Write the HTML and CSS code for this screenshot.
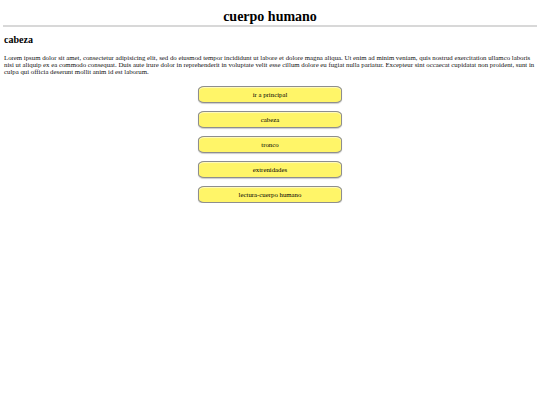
FILE: index.html
```html
<!DOCTYPE html>
<html lang="es">
<head>
<meta charset="utf-8">
<title>cuerpo humano</title>
<link rel="stylesheet" href="styles.css">
</head>
<body>
<header class="top">
  <h1 class="title">cuerpo humano</h1>
</header>
<main class="content">
  <h3 class="section">cabeza</h3>
  <p class="text">Lorem ipsum dolor sit amet, consectetur adipisicing elit, sed do eiusmod tempor incididunt ut labore et dolore magna aliqua. Ut enim ad minim veniam, quis nostrud exercitation ullamco laboris nisi ut aliquip ex ea commodo consequat. Duis aute irure dolor in reprehenderit in voluptate velit esse cillum dolore eu fugiat nulla pariatur. Excepteur sint occaecat cupidatat non proident, sunt in culpa qui officia deserunt mollit anim id est laborum.</p>
  <nav class="menu">
    <a class="btn" href="#">ir a principal</a>
    <a class="btn" href="#">cabeza</a>
    <a class="btn" href="#">tronco</a>
    <a class="btn" href="#">extrenidades</a>
    <a class="btn" href="#">lectura-cuerpo humano</a>
  </nav>
</main>
</body>
</html>
```
FILE: styles.css
```css
html, body {
  margin: 0;
  padding: 0;
  background: #fff;
}
body {
  font-family: "Liberation Serif", "Times New Roman", serif;
  color: #000;
  padding: 0 3px;
}
.top {
  border-bottom: 2px solid #d8d8d8;
  padding-top: 9px;
  padding-bottom: 1px;
}
.title {
  margin: 0;
  text-align: center;
  font-size: 14px;
  line-height: 15px;
  font-weight: bold;
}
.content {
  padding: 0 1px;
}
.section {
  margin: 7px 0 0;
  font-size: 10px;
  line-height: 12px;
  font-weight: bold;
}
.text {
  margin: 8px 0 0;
  font-size: 6.8px;
  line-height: 7px;
  color: #111;
}
.menu {
  display: flex;
  flex-direction: column;
  align-items: center;
  gap: 8px;
  margin-top: 11px;
}
.btn {
  display: block;
  width: 142px;
  height: 15px;
  line-height: 15px;
  text-align: center;
  font-size: 6.8px;
  color: #000;
  text-decoration: none;
  background: #fff568;
  border: 1px solid #8e8e8e;
  border-radius: 6px / 4px;
  box-shadow: inset 0 1px 1px rgba(255,255,255,0.6), 0 1px 1px rgba(0,0,0,0.2);
}
```
